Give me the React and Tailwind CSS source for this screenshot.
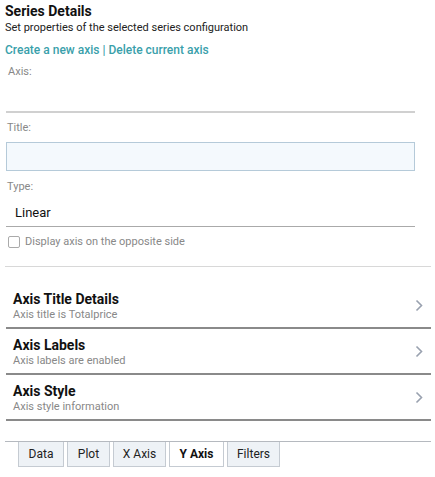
import React from "react";

const sections = [
  { title: "Axis Title Details", sub: "Axis title is Totalprice" },
  { title: "Axis Labels", sub: "Axis labels are enabled" },
  { title: "Axis Style", sub: "Axis style information" },
];

const tabs = [
  { label: "Data", w: "w-[46px]" },
  { label: "Plot", w: "w-[43px]" },
  { label: "X Axis", w: "w-[53px]" },
  { label: "Y Axis", w: "w-[55px]" },
  { label: "Filters", w: "w-[53px]" },
];

function Chevron() {
  return (
    <svg width="8" height="13" viewBox="0 0 8 13" className="text-gray-400">
      <path d="M1.5 1.5 L6.5 6.5 L1.5 11.5" fill="none" stroke="currentColor" strokeWidth="1.6" />
    </svg>
  );
}

export default function App() {
  return (
    <div
      className="w-[435px] h-[477px] bg-white text-[#222] overflow-hidden"
      style={{ fontFamily: "Roboto, 'Liberation Sans', sans-serif" }}
    >
      {/* Header */}
      <div className="px-[5px] pt-[1px]">
        <h1 className="text-[14px] font-bold leading-[20px] text-[#111]">Series Details</h1>
        <p className="text-[11px] leading-[16px] text-[#222] mt-[-1px]">
          Set properties of the selected series configuration
        </p>
        <p className="text-[12px] font-medium leading-[18px] text-[#3a9fab] mt-[5px]">
          <span>Create a new axis</span> | <span>Delete current axis</span>
        </p>
      </div>

      {/* Form */}
      <div className="pl-[6px] pr-[20px]">
        <div className="mt-[6px] text-[11px] leading-[14px] text-[#888] pl-[2px]">Axis:</div>
        <div className="h-[34px] border-b-2 border-[#d0d0d0]" />

        <div className="mt-[8px] text-[11px] leading-[14px] text-[#888] pl-[1px]">Title:</div>
        <div className="mt-[7px] h-[29px] bg-[#f4f9fd] border border-[#b5cad9]" />

        <div className="mt-[9px] text-[11px] leading-[14px] text-[#888] pl-[1px]">Type:</div>
        <div className="h-[20px] pt-[12px] border-b border-[#aaa] box-content">
          <span className="pl-[9px] text-[13px] leading-[14px] text-[#111] block">Linear</span>
        </div>

        <label className="mt-[8px] flex items-center gap-[5px] pl-[2px]">
          <span className="w-[12px] h-[12px] border border-[#aaa] rounded-[2px] bg-white" />
          <span className="text-[11px] leading-[14px] text-[#888]">Display axis on the opposite side</span>
        </label>
      </div>

      <div className="mx-[5px] mr-[4px] mt-[17px] border-t border-[#d8d8d8]" />

      {/* Sections */}
      <div className="mt-[16px] mx-[6px] mr-[4px]">
        {sections.map((s) => (
          <div
            key={s.title}
            className="h-[46px] flex items-center justify-between border-b-2 border-[#8a8a8a] pl-[7px] pr-[8px]"
          >
            <div className="pt-[2px]">
              <div className="text-[14px] font-bold leading-[17px] text-[#111]">{s.title}</div>
              <div className="text-[11px] leading-[14px] text-[#888]">{s.sub}</div>
            </div>
            <Chevron />
          </div>
        ))}
      </div>

      {/* Tabs */}
      <div className="mt-[20px] mx-[5px] mr-[4px] border-t border-[#b5b9bf] flex gap-[3px] pl-[13px]">
        {tabs.map((t) => {
          const active = t.label === "Y Axis";
          return (
            <div
              key={t.label}
              className={
                active
                  ? `${t.w} h-[25px] flex items-center justify-center text-[12px] font-bold text-[#111] bg-white border border-t-0 border-[#c5cbd2]`
                  : `${t.w} h-[25px] flex items-center justify-center text-[12px] text-[#222] bg-[#eef2f6] border border-t-0 border-[#c5cbd2]`
              }
            >
              {t.label}
            </div>
          );
        })}
      </div>
    </div>
  );
}
